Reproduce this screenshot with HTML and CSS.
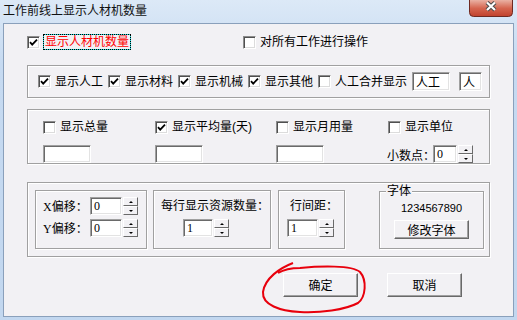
FILE: index.html
```html
<!DOCTYPE html>
<html lang="zh-CN">
<head>
    <meta charset="UTF-8">
    <title>工作前线上显示人材机数量</title>
    <link rel="stylesheet" href="styles.css">
</head>
<body>
<div class="window">
    <div class="titlebar">
        <span class="title">工作前线上显示人材机数量</span>
        <div class="close">
            <svg width="44" height="17" viewBox="0 0 44 17">
                <defs>
                    <linearGradient id="cg" x1="0" y1="0" x2="0" y2="1">
                        <stop offset="0" stop-color="#eab1a3"/>
                        <stop offset="0.5" stop-color="#d5654f"/>
                        <stop offset="1" stop-color="#c0412c"/>
                    </linearGradient>
                </defs>
                <path d="M0.5 0 V12.5 Q0.5 16.5 4.5 16.5 H39.5 Q43.5 16.5 43.5 12.5 V0" fill="url(#cg)" stroke="#6e2a22"/>
                <path d="M18 2.5 L26 10 M26 2.5 L18 10" stroke="#4a4a4a" stroke-width="4.2"/>
                <path d="M18 2.5 L26 10 M26 2.5 L18 10" stroke="#fff" stroke-width="2.2"/>
            </svg>
        </div>
    </div>

    <div class="client">
        <div class="top-row">
            <label class="check first"><span class="box"><svg width="9" height="9" viewBox="0 0 9 9"><polyline points="1,4.2 3.2,6.6 8,1.6" fill="none" stroke="#000" stroke-width="1.8"/></svg></span><span class="focus">显示人材机数量</span></label>
            <label class="check"><span class="box"></span>对所有工作进行操作</label>
        </div>

        <!-- fila de checkboxes -->
        <div class="group g1">
            <label class="check"><span class="box"><svg width="9" height="9" viewBox="0 0 9 9"><polyline points="1,4.2 3.2,6.6 8,1.6" fill="none" stroke="#000" stroke-width="1.8"/></svg></span>显示人工</label>
            <label class="check"><span class="box"><svg width="9" height="9" viewBox="0 0 9 9"><polyline points="1,4.2 3.2,6.6 8,1.6" fill="none" stroke="#000" stroke-width="1.8"/></svg></span>显示材料</label>
            <label class="check"><span class="box"><svg width="9" height="9" viewBox="0 0 9 9"><polyline points="1,4.2 3.2,6.6 8,1.6" fill="none" stroke="#000" stroke-width="1.8"/></svg></span>显示机械</label>
            <label class="check"><span class="box"><svg width="9" height="9" viewBox="0 0 9 9"><polyline points="1,4.2 3.2,6.6 8,1.6" fill="none" stroke="#000" stroke-width="1.8"/></svg></span>显示其他</label>
            <label class="check"><span class="box"></span>人工合并显示</label>
            <span class="input w38">人工</span>
            <span class="input w23 last">人</span>
        </div>

        <div class="group g2">
            <div class="col c1">
                <label class="check"><span class="box"></span>显示总量</label>
                <span class="input w48"></span>
            </div>
            <div class="col c2">
                <label class="check"><span class="box"><svg width="9" height="9" viewBox="0 0 9 9"><polyline points="1,4.2 3.2,6.6 8,1.6" fill="none" stroke="#000" stroke-width="1.8"/></svg></span>显示平均量(天)</label>
                <span class="input w48"></span>
            </div>
            <div class="col c3">
                <label class="check"><span class="box"></span>显示月用量</label>
                <span class="input w48"></span>
            </div>
            <div class="col c4">
                <label class="check"><span class="box"></span>显示单位</label>
                <div class="spin-row">
                    <span class="lbl-dec">小数点：</span>
                    <span class="input w24">0</span>
                    <span class="spin"><span class="up"></span><span class="down"></span></span>
                </div>
            </div>
        </div>

        <div class="group g3">
            <div class="sub sa">
                <div class="spin-row">
                    <span class="lbl-off">X偏移：</span>
                    <span class="input w32">0</span>
                    <span class="spin"><span class="up"></span><span class="down"></span></span>
                </div>
                <div class="spin-row">
                    <span class="lbl-off">Y偏移：</span>
                    <span class="input w32">0</span>
                    <span class="spin"><span class="up"></span><span class="down"></span></span>
                </div>
            </div>
            <div class="sub sb">
                <div class="lbl-row">每行显示资源数量：</div>
                <div class="spin-row">
                    <span class="input w30">1</span>
                    <span class="spin"><span class="up"></span><span class="down"></span></span>
                </div>
            </div>
            <div class="sub sc">
                <div class="lbl-row">行间距：</div>
                <div class="spin-row">
                    <span class="input w31">1</span>
                    <span class="spin"><span class="up"></span><span class="down"></span></span>
                </div>
            </div>
            <div class="sub sd">
                <span class="caption">字体</span>
                <div class="sample">1234567890</div>
                <button class="btn font-btn">修改字体</button>
            </div>
        </div>

        <div class="buttons">
            <button class="btn main">确定</button>
            <button class="btn main">取消</button>
        </div>
    </div>

    <!-- marca roja dibujada a mano -->
    <svg class="mark" width="517" height="320" viewBox="0 0 517 320">
        <path d="M293 263 C280 268 265 278 263 292 C262 305 280 311 300 312 C320 313 345 310 358 303 C366 297 367 280 360 272 C352 265 320 266 300 268 C290 268 283 270 278 273" fill="none" stroke="#e8000c" stroke-width="2"/>
    </svg>
</div>
</body>
</html>
```

FILE: styles.css
```css
* {
    margin: 0;
    padding: 0;
    box-sizing: border-box;
}

body {
    width: 517px;
    height: 320px;
    overflow: hidden;
    font-family: "Liberation Sans", "Noto Sans CJK SC", sans-serif;
    font-size: 12px;
    color: #000;
}

.window {
    position: relative;
    width: 517px;
    height: 320px;
    display: flex;
    flex-direction: column;
    padding: 0 3px 3px 3px;
    background: linear-gradient(#dce9f7, #c6daf1 20%, #c2d7ef);
}

.titlebar {
    height: 23px;
    display: flex;
    justify-content: space-between;
    align-items: flex-start;
}

.title {
    padding-top: 4px;
    line-height: 14px;
    color: #111;
}

.close {
    width: 44px;
    height: 17px;
    margin-right: 1px;
}

.client {
    flex: 1;
    background: #f2f1f4;
    border: 1px solid #8aa0bb;
    padding: 10px 0 0 23px;
}

/* checkboxes */
.top-row {
    display: flex;
    align-items: center;
    height: 16px;
}

.top-row .first {
    width: 216px;
}

.check {
    display: flex;
    align-items: center;
    gap: 4px;
    line-height: 14px;
    white-space: nowrap;
}

.box {
    width: 13px;
    height: 13px;
    flex: none;
    display: flex;
    align-items: center;
    justify-content: center;
    background: #fff;
    border: 1px solid;
    border-color: #8c8c8c #fff #fff #8c8c8c;
    box-shadow: inset 1px 1px 0 #505050, inset -1px -1px 0 #dcdcdc;
}

.focus {
    color: #f00;
    padding: 0 1px;
    outline: 1px dotted #000;
    box-shadow: 0 0 0 1px #20d8d8;
}

/* cajas de texto */
.input {
    display: flex;
    align-items: center;
    flex: none;
    height: 18px;
    padding-left: 3px;
    background: #fff;
    border: 1px solid;
    border-color: #a0a0a0 #fff #fff #a0a0a0;
    box-shadow: inset 1px 1px 0 #6a6a6a, inset -1px -1px 0 #e3e3e3;
    line-height: 14px;
    font-family: "Liberation Serif", "Noto Sans CJK SC", serif;
}

.w23 { width: 23px; }
.w24 { width: 24px; }
.w30 { width: 30px; }
.w31 { width: 31px; }
.w32 { width: 32px; }
.w38 { width: 38px; }
.w48 { width: 48px; }

.g1 .input {
    height: 19px;
    font-family: "Noto Sans CJK SC", sans-serif;
}

.spin {
    flex: none;
    width: 15px;
    height: 18px;
    margin-left: 1px;
    display: flex;
    flex-direction: column;
}

.spin span {
    flex: 1;
    display: flex;
    align-items: center;
    justify-content: center;
    background: #f2f1f4;
    border: 1px solid;
    border-color: #fff #6a6a6a #6a6a6a #fff;
}

.spin .up::before {
    content: "";
    border-left: 2px solid transparent;
    border-right: 2px solid transparent;
    border-bottom: 2px solid #000;
}

.spin .down::before {
    content: "";
    border-left: 2px solid transparent;
    border-right: 2px solid transparent;
    border-top: 2px solid #000;
}

/* cuadros agrupados */
.group,
.sub {
    border: 1px solid #a0a0a0;
    box-shadow: 1px 1px 0 #fff, inset 1px 1px 0 #fff;
}

.group {
    width: 463px;
}

.g1 {
    margin-top: 15px;
    height: 33px;
    display: flex;
    align-items: center;
    gap: 5px;
    padding-left: 10px;
}

.g1 .last {
    margin-left: 4px;
}

.g2 {
    margin-top: 11px;
    height: 55px;
    display: flex;
    padding: 10px 0 0 15px;
}

.col {
    display: flex;
    flex-direction: column;
    gap: 11px;
}

.c1 { width: 112px; }
.c2 { width: 121px; }
.c3 { width: 112px; }

.spin-row {
    display: flex;
    align-items: center;
    height: 18px;
    white-space: nowrap;
}

.lbl-dec {
    flex: none;
    width: 46px;
    margin-left: -1px;
    font-family: "Noto Sans CJK SC", sans-serif;
}

.g3 {
    margin-top: 18px;
    height: 75px;
    display: flex;
    align-items: flex-start;
    padding: 7px 0 0 7px;
}

.sub {
    height: 59px;
    display: flex;
    flex-direction: column;
    gap: 4px;
    padding-top: 6px;
}

.sa {
    width: 112px;
    padding-left: 7px;
}

.lbl-off {
    flex: none;
    width: 47px;
    font-family: "Liberation Serif", "Noto Sans CJK SC", serif;
}

.lbl-row {
    height: 18px;
    line-height: 18px;
    white-space: nowrap;
}

.sb {
    width: 118px;
    margin-left: 6px;
    padding-left: 7px;
}

.sb .spin-row {
    padding-left: 22px;
}

.sc {
    width: 67px;
    margin-left: 7px;
    padding-left: 8px;
}

.sc .lbl-row {
    padding-left: 3px;
}

.sd {
    position: relative;
    width: 105px;
    height: 58px;
    margin: 1px 0 0 34px;
    align-items: center;
    gap: 5px;
    padding-top: 10px;
}

.caption {
    position: absolute;
    top: -8px;
    left: 6px;
    padding: 0 1px;
    background: #f2f1f4;
    line-height: 14px;
}

.sample {
    font-size: 11px;
    line-height: 13px;
}

/* botones */
.btn {
    font-family: "Noto Sans CJK SC", sans-serif;
    font-size: 12px;
    color: #000;
    background: #f2f1f4;
    border: 1px solid;
    border-color: #fff #696969 #696969 #fff;
    box-shadow: inset -1px -1px 0 #a0a0a0;
    line-height: 14px;
}

.font-btn {
    width: 75px;
    height: 19px;
}

.buttons {
    display: flex;
    gap: 29px;
    margin: 16px 0 0 256px;
}

.main {
    width: 75px;
    height: 24px;
}

.mark {
    position: absolute;
    top: 0;
    left: 0;
    pointer-events: none;
}
```
